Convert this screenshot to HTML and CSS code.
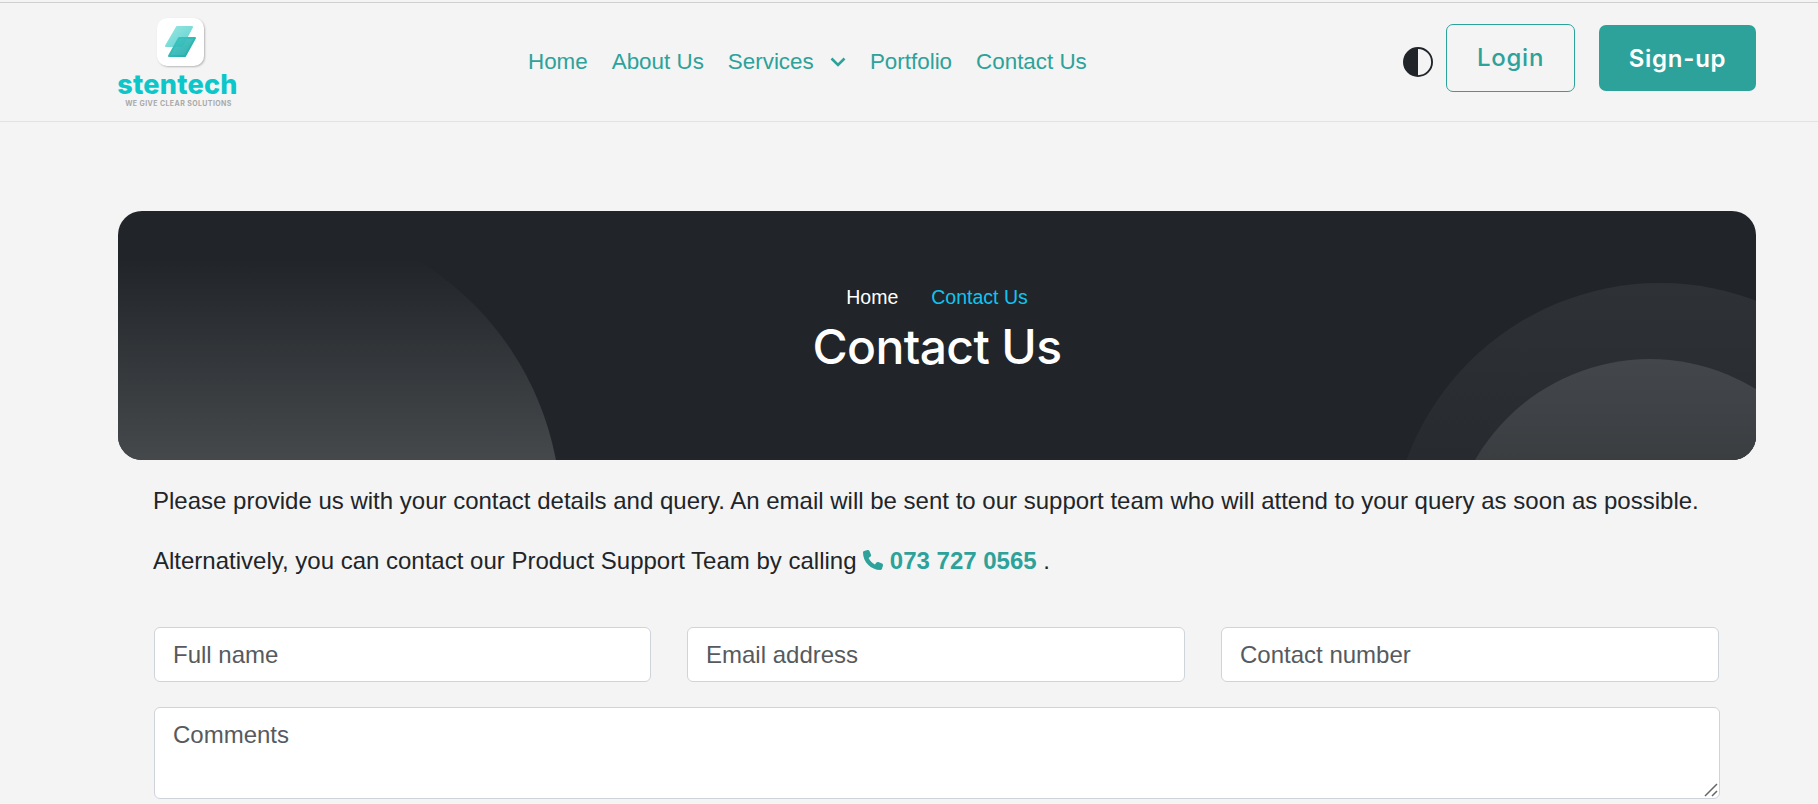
FILE: index.html
```html
<!DOCTYPE html>
<html lang="en">
<head>
  <meta charset="UTF-8">
  <title>Contact Us</title>
  <meta name="viewport" content="width=device-width, initial-scale=1.0">
  <link rel="stylesheet" href="styles.css">
</head>
<body>
  <header class="site-header">
    <a class="logo" href="#">
      <span class="logo-icon">
        <svg width="47" height="48" viewBox="0 0 47 48">
          <defs>
            <linearGradient id="logo-top" x1="0" y1="0" x2="1" y2="1">
              <stop offset="0" stop-color="#97e6e2"/>
              <stop offset="1" stop-color="#62d3d0"/>
            </linearGradient>
            <linearGradient id="logo-bottom" x1="0" y1="0" x2="1" y2="1">
              <stop offset="0" stop-color="#44c9c4"/>
              <stop offset="1" stop-color="#1fa9a8"/>
            </linearGradient>
          </defs>
          <path d="M20 9H35L25 28H9Z" fill="url(#logo-top)" stroke="url(#logo-top)" stroke-width="2" stroke-linejoin="round"/>
          <path d="M22 20H38L28 38H12Z" fill="url(#logo-bottom)" fill-opacity=".92" stroke="url(#logo-bottom)" stroke-width="2" stroke-linejoin="round"/>
        </svg>
      </span>
      <span class="logo-name">stentech</span>
      <span class="logo-tag">WE GIVE CLEAR SOLUTIONS</span>
    </a>
    <nav class="main-nav">
      <a href="#">Home</a>
      <a href="#">About Us</a>
      <a class="has-menu" href="#">Services
        <svg width="16" height="16" viewBox="0 0 16 16"><path d="M1.500 4.500L8 11L14.500 4.500" fill="none" stroke="#2ca29a" stroke-width="2.600"/></svg>
      </a>
      <a href="#">Portfolio</a>
      <a href="#">Contact Us</a>
    </nav>
    <div class="header-actions">
      <svg class="theme-icon" width="30" height="30" viewBox="0 0 16 16"><path d="M8 0a8 8 0 1 0 0 16A8 8 0 0 0 8 0zm0 15V1a7 7 0 1 1 0 14z" fill="#212529"/></svg>
      <a class="btn btn-outline" href="#">Login</a>
      <a class="btn btn-solid" href="#">Sign-up</a>
    </div>
  </header>

  <main class="content">
    <section class="banner">
      <span class="circle circle-left"></span>
      <span class="circle circle-right-big"></span>
      <span class="circle circle-right-small"></span>
      <div class="crumbs">
        <a href="#">Home</a>
        <span>Contact Us</span>
      </div>
      <h1>Contact Us</h1>
    </section>

    <div class="contact-body">
      <p>Please provide us with your contact details and query. An email will be sent to our support team who will attend to your query as soon as possible.</p>
      <p>Alternatively, you can contact our Product Support Team by calling
        <a class="phone" href="#"><svg width="20" height="20" viewBox="0 0 512 512"><path d="M164.900 24.600c-7.700-18.600-28-28.500-47.400-23.200l-88 24C12.100 30.200 0 46 0 64C0 311.400 200.600 512 448 512c18 0 33.800-12.100 38.600-29.500l24-88c5.300-19.400-4.600-39.700-23.200-47.400l-96-40c-16.300-6.800-35.200-2.100-46.300 11.600L304.700 368C234.300 334.700 177.300 277.700 144 207.300L193.300 167c13.700-11.200 18.400-30 11.600-46.300l-40-96z" fill="#2ca29a"/></svg> 073 727 0565</a> .
      </p>
      <form class="contact-form">
        <div class="field-row">
          <input type="text" placeholder="Full name">
          <input type="email" placeholder="Email address">
          <input type="tel" placeholder="Contact number">
        </div>
        <div class="comments">
          <textarea placeholder="Comments"></textarea>
          <svg class="grip" width="14" height="14" viewBox="0 0 14 14"><path d="M1 13L13 1M8 13L13 8" stroke="#666" stroke-width="1.500" fill="none"/></svg>
        </div>
      </form>
    </div>
  </main>
</body>
</html>
```

FILE: styles.css
```css
* {
  box-sizing: border-box;
}

html, body {
  height: 100%;
  overflow: hidden;
}

body {
  margin: 0;
  padding-top: 2px;
  background-color: #f4f4f4;
  color: #212529;
  font-family: "Liberation Sans", Arial, sans-serif;
}

a {
  text-decoration: none;
}

.site-header {
  display: flex;
  align-items: center;
  height: 120px;
  padding: 0 62px 0 118px;
  border-top: 1px solid #cfcfcf;
  border-bottom: 1px solid #e2e2e2;
}

.logo {
  display: flex;
  flex-direction: column;
  align-items: center;
  width: 119px;
  margin-top: 1px;
}

.logo-icon {
  display: block;
  width: 47px;
  height: 48px;
  margin-left: 6px;
  background: #fff;
  border-radius: 10px;
  box-shadow: 1px 1px 2px rgba(0, 0, 0, .25);
}

.logo-name {
  margin-top: 6px;
  color: #0cc6ca;
  font-family: Inter, sans-serif;
  font-size: 27px;
  font-weight: 800;
  line-height: 26px;
  letter-spacing: .25px;
  white-space: nowrap;
}

.logo-tag {
  margin-top: 2px;
  margin-left: 2px;
  color: #a9a9a9;
  font-family: Inter, sans-serif;
  font-size: 7px;
  font-weight: 700;
  line-height: 8px;
  letter-spacing: .4px;
  white-space: nowrap;
}

.main-nav {
  display: flex;
  align-items: center;
  gap: 24px;
  margin-left: 291px;
}

.main-nav a {
  color: #2ca29a;
  font-size: 22.400px;
}

.has-menu svg {
  margin-left: 10px;
  vertical-align: -1px;
}

.header-actions {
  display: flex;
  align-items: center;
  margin-left: auto;
}

.theme-icon {
  margin-right: 13px;
}

.btn {
  display: flex;
  align-items: center;
  justify-content: center;
  margin-bottom: 8px;
  font-family: Inter, sans-serif;
  font-size: 24px;
  letter-spacing: .75px;
  border-radius: 7px;
}

.btn-outline {
  width: 129px;
  height: 68px;
  margin-right: 24px;
  padding-bottom: 2px;
  border: 1px solid #2ca29a;
  color: #2ca29a;
  font-weight: 500;
}

.btn-solid {
  width: 157px;
  height: 66px;
  background: #2ca29a;
  color: #fff;
  font-weight: 600;
}

.content {
  padding: 89px 62px 0 118px;
}

.banner {
  position: relative;
  overflow: hidden;
  height: 249px;
  padding-top: 71px;
  background: #212529;
  border-radius: 24px;
  text-align: center;
  color: #fff;
}

.circle {
  position: absolute;
  border-radius: 50%;
}

.circle-left {
  left: -153px;
  top: 6px;
  width: 596px;
  height: 596px;
  background: linear-gradient(#212529 7%, #45494c 41%);
}

.circle-right-big {
  left: 1272px;
  top: 72px;
  width: 540px;
  height: 540px;
  background: linear-gradient(#2e3135 0, #272a2e 33%);
}

.circle-right-small {
  left: 1330px;
  top: 148px;
  width: 404px;
  height: 404px;
  background: linear-gradient(#43464b 0, #3b3e41 25%);
}

.crumbs {
  position: relative;
  display: flex;
  justify-content: center;
  gap: 33px;
  font-size: 19.500px;
  line-height: 30px;
}

.crumbs a {
  color: #fff;
}

.crumbs span {
  color: #10c4f0;
}

.banner h1 {
  position: relative;
  margin: 6px 0 0;
  font-family: Inter, sans-serif;
  font-size: 48px;
  font-weight: 500;
  line-height: 58px;
  letter-spacing: -.6px;
}

.contact-body {
  padding: 24px 36px 0;
}

.contact-body p {
  margin: 0 0 27px -1px;
  font-size: 24px;
  line-height: 33px;
}

.phone {
  color: #2ca29a;
  font-weight: 700;
}

.phone svg {
  vertical-align: -1px;
}

.contact-form {
  margin-top: 50px;
}

.field-row {
  display: grid;
  grid-template-columns: 497px 498px 498px;
  gap: 36px;
  margin-bottom: 25px;
}

.comments {
  position: relative;
}

.grip {
  position: absolute;
  right: 2px;
  bottom: 2px;
  pointer-events: none;
}

.contact-form input,
.contact-form textarea {
  display: block;
  width: 100%;
  padding: 12px 18px;
  background: #fff;
  border: 1px solid #ced4da;
  border-radius: 6px;
  color: #212529;
  font-family: "Liberation Sans", Arial, sans-serif;
  font-size: 24px;
  outline: none;
}

.contact-form input {
  height: 55px;
}

.contact-form textarea {
  height: 92px;
  padding-top: 13px;
  resize: none;
}

.contact-form ::placeholder {
  color: #565a5e;
  opacity: 1;
}
```
